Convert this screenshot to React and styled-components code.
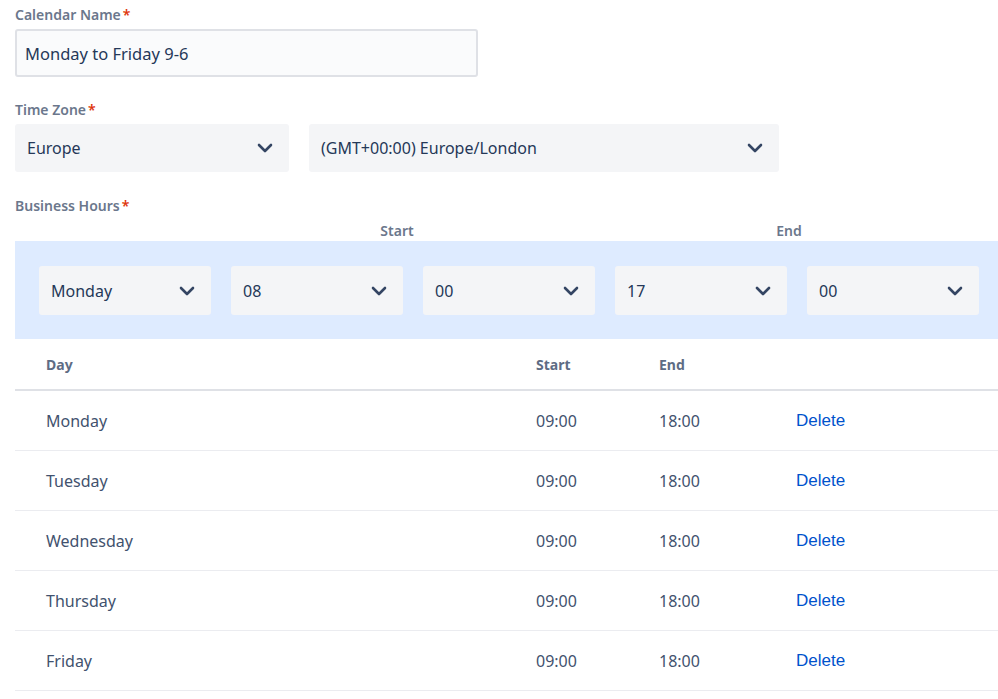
import React from "react";
import styled, { createGlobalStyle } from "styled-components";

const Global = createGlobalStyle`
  html, body { margin: 0; padding: 0; background: #fff; }
  body { font-family: "Noto Sans", "Open Sans", sans-serif; color: #253858; }
  * { box-sizing: border-box; }
`;

const Page = styled.div`
  width: 998px;
  padding: 5px 0 0 15px;
  overflow: hidden;
`;

const Label = styled.div`
  font-size: 14px;
  font-weight: 600;
  color: #6b778c;
  line-height: 20px;
  margin-bottom: ${(p) => p.$mb ?? 4}px;
  span { color: #de350b; margin-left: 2px; }
`;

const Field = styled.div`
  margin-bottom: ${(p) => p.$mb || 0}px;
`;

const TextInput = styled.div`
  width: 463px;
  height: 48px;
  border: 2px solid #dfe1e6;
  border-radius: 3px;
  background: #fafbfc;
  padding: 0 8px;
  display: flex;
  align-items: center;
  font-size: 16.5px;
  color: #253858;
`;

const Row = styled.div`
  display: flex;
  gap: 20px;
`;

const Select = styled.div`
  width: ${(p) => p.$w}px;
  height: ${(p) => p.$h || 48}px;
  background: #f4f5f7;
  border-radius: 3px;
  display: flex;
  align-items: center;
  justify-content: space-between;
  padding: 0 16px 0 12px;
  font-size: 16px;
  color: #253858;
`;

const Chevron = () => (
  <svg width="16" height="10" viewBox="0 0 16 10" fill="none">
    <path d="M2 2 L8 8 L14 2" stroke="#344563" strokeWidth="2.6" strokeLinecap="round" strokeLinejoin="round" />
  </svg>
);

const HeadRow = styled.div`
  display: grid;
  grid-template-columns: 24px 172px 20px 172px 20px 172px 20px 172px 20px 172px;
  height: 25px;
  align-items: end;
`;

const GroupHead = styled.div`
  grid-column: ${(p) => p.$col};
  text-align: center;
  padding-right: ${(p) => p.$pr}px;
  font-size: 14px;
  font-weight: 600;
  color: #6b778c;
  line-height: 20px;
`;

const Band = styled.div`
  background: #deebff;
  padding: 25px 0 24px 24px;
  display: flex;
  gap: 20px;
  width: 983px;
`;

const Table = styled.div`
  width: 983px;
`;

const TRow = styled.div`
  display: grid;
  grid-template-columns: 490px 123px 137px 1fr;
  padding-left: 31px;
  align-items: center;
  height: ${(p) => (p.$head ? 52 : 60)}px;
  border-bottom: ${(p) => (p.$head ? "2px solid #dfe1e6" : "1px solid #ebecf0")};
`;

const Th = styled.div`
  font-size: 14px;
  font-weight: 700;
  color: #5e6c84;
`;

const Td = styled.div`
  font-size: 16px;
  color: #42526e;
  padding-top: 1px;
`;

const DeleteLink = styled.a`
  font-family: "Liberation Sans", Arial, sans-serif;
  font-size: 17px;
  color: #0052cc;
  text-decoration: none;
  cursor: pointer;
`;

const days = ["Monday", "Tuesday", "Wednesday", "Thursday", "Friday"];

export default function App() {
  return (
    <Page>
      <Global />
      <Field $mb={23}>
        <Label>Calendar Name<span>*</span></Label>
        <TextInput>Monday to Friday 9-6</TextInput>
      </Field>
      <Field $mb={24}>
        <Label>Time Zone<span>*</span></Label>
        <Row>
          <Select $w={274}>Europe<Chevron /></Select>
          <Select $w={470}>(GMT+00:00) Europe/London<Chevron /></Select>
        </Row>
      </Field>
      <Label $mb={0}>Business Hours<span>*</span></Label>
      <HeadRow>
        <GroupHead $col="4 / 7" $pr={32}>Start</GroupHead>
        <GroupHead $col="8 / 11" $pr={16}>End</GroupHead>
      </HeadRow>
      <Band>
        <Select $w={172} $h={49}>Monday<Chevron /></Select>
        <Select $w={172} $h={49}>08<Chevron /></Select>
        <Select $w={172} $h={49}>00<Chevron /></Select>
        <Select $w={172} $h={49}>17<Chevron /></Select>
        <Select $w={172} $h={49}>00<Chevron /></Select>
      </Band>
      <Table>
        <TRow $head>
          <Th>Day</Th>
          <Th>Start</Th>
          <Th>End</Th>
          <Th />
        </TRow>
        {days.map((d) => (
          <TRow key={d}>
            <Td>{d}</Td>
            <Td>09:00</Td>
            <Td>18:00</Td>
            <DeleteLink>Delete</DeleteLink>
          </TRow>
        ))}
      </Table>
    </Page>
  );
}
